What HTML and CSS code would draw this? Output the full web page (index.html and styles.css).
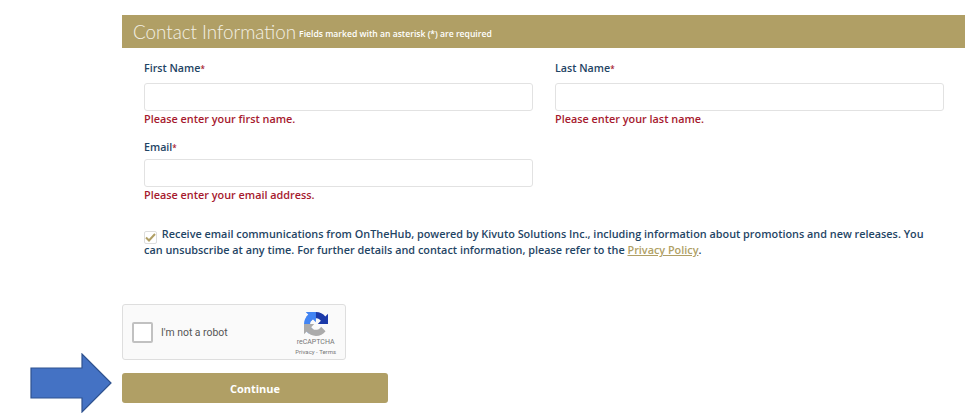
FILE: index.html
```html
<!DOCTYPE html>
<html lang="en">
<head>
  <meta charset="UTF-8">
  <meta name="viewport" content="width=device-width, initial-scale=1.0">
  <title>Contact Information</title>
  <link rel="stylesheet" href="styles.css">
</head>
<body>
  <svg class="arrow" width="84" height="60" viewBox="0 0 84 60">
    <path d="M1 15H52V1L81 30L52 59V45H1Z" fill="#4472c4" stroke="#2f528f" stroke-width="1.2"/>
  </svg>
  <div class="container">
    <div class="section-head">
      <span class="section-title">Contact Information</span>
      <span class="section-note">Fields marked with an asterisk (*) are required</span>
    </div>
    <div class="fields">
      <div class="field">
        <label>First Name<span class="req">*</span></label>
        <input type="text">
        <p class="error">Please enter your first name.</p>
      </div>
      <div class="field">
        <label>Last Name<span class="req">*</span></label>
        <input type="text">
        <p class="error">Please enter your last name.</p>
      </div>
      <div class="field field-tight">
        <label>Email<span class="req">*</span></label>
        <input type="text">
        <p class="error">Please enter your email address.</p>
      </div>
    </div>
    <p class="consent">
      <span class="check">
        <svg width="11" height="9" viewBox="0 0 11 9"><path d="M1 4.5L4 7.5L10 1" fill="none" stroke="#b09f65" stroke-width="2"/></svg>
      </span>
      Receive email communications from OnTheHub, powered by Kivuto Solutions Inc., including information about promotions and new releases. You can unsubscribe at any time. For further details and contact information, please refer to the <a href="#">Privacy Policy</a>.
    </p>
    <div class="captcha">
      <span class="captcha-box"></span>
      <span class="captcha-text">I'm not a robot</span>
      <div class="captcha-logo">
        <svg width="24" height="24" viewBox="0 0 64 64">
          <path d="M64 31.955l-.033-1.37V4.687l-7.16 7.16C50.948 4.674 42.033.093 32.05.093c-10.4 0-19.622 4.96-25.458 12.64l11.736 11.86a15.55 15.55 0 0 1 4.754-5.334c2.05-1.6 4.952-2.906 8.968-2.906.485 0 .86.057 1.135.163 4.976.393 9.288 3.14 11.828 7.124l-8.307 8.307 32.294.01" fill="#1c3aa9"/>
          <path d="M31.862.094l-1.37.033H4.594l7.16 7.16C4.58 13.147 0 22.06 0 32.046c0 10.4 4.96 19.622 12.64 25.458l11.86-11.736a15.55 15.55 0 0 1-5.334-4.754c-1.6-2.05-2.906-4.952-2.906-8.968 0-.485.057-.86.163-1.135.393-4.976 3.14-9.288 7.124-11.828l8.307 8.307L31.862.094" fill="#4285f4"/>
          <path d="M.001 32.045l.033 1.37v25.898l7.16-7.16c5.86 7.173 14.775 11.754 24.76 11.754 10.4 0 19.622-4.96 25.458-12.64L45.676 39.407a15.55 15.55 0 0 1-4.754 5.334c-2.05 1.6-4.952 2.906-8.968 2.906-.485 0-.86-.057-1.135-.163-4.976-.393-9.288-3.14-11.828-7.124l8.307-8.307-32.294-.008" fill="#ababab"/>
        </svg>
        <span class="captcha-brand">reCAPTCHA</span>
        <span class="captcha-links">Privacy - Terms</span>
      </div>
    </div>
    <button class="continue">Continue</button>
  </div>
</body>
</html>
```

FILE: styles.css
```css
body {
  font-family: "Open Sans", Arial, sans-serif;
  background: #fff;
  margin: 0;
  padding: 15px 10px 0 122px;
  color: #1f4565;
  overflow: hidden;
}
.container {
  width: 843px;
}
.arrow {
  position: absolute;
  left: 30px;
  top: 353px;
}
.section-head {
  background: #b09f65;
  color: #fff;
  height: 33px;
  display: flex;
  align-items: center;
  gap: 3px;
  padding-left: 11px;
}
.section-title {
  font-family: Lato, Arial, sans-serif;
  font-size: 18.8px;
  font-weight: 300;
  color: #f4f1e6;
}
.section-note {
  font-size: 8.6px;
  font-weight: 600;
  padding-top: 5px;
}
.fields {
  display: grid;
  grid-template-columns: 389px 389px;
  column-gap: 22px;
  row-gap: 14px;
  padding: 13px 0 0 22px;
}
.field label {
  display: block;
  font-size: 10.7px;
  font-weight: 600;
  line-height: 15px;
}
.req {
  color: #a6192e;
  font-size: 8px;
}
.field input {
  display: block;
  box-sizing: border-box;
  width: 100%;
  height: 28px;
  margin-top: 7px;
  border: 1px solid #e2e2e2;
  border-radius: 3px;
  background: #fff;
}
.field-tight input {
  margin-top: 4px;
}
.error {
  color: #a6192e;
  font-size: 10.85px;
  font-weight: 600;
  line-height: 15px;
  margin: 0;
}
.consent {
  margin: 24px 0 0 22px;
  width: 790px;
  font-size: 10.85px;
  font-weight: 600;
  line-height: 16px;
}
.consent a {
  color: #b09f65;
}
.check {
  display: inline-flex;
  align-items: center;
  justify-content: center;
  box-sizing: border-box;
  width: 13px;
  height: 13px;
  margin: -4px 2px -4px 0;
  border: 1px solid #ddd;
  border-radius: 2px;
  vertical-align: -4px;
}
.captcha {
  box-sizing: border-box;
  width: 224px;
  height: 56px;
  margin-top: 46px;
  display: flex;
  align-items: center;
  padding: 0 9px;
  background: #fafafa;
  border: 1px solid #dedede;
  border-radius: 3px;
}
.captcha-box {
  box-sizing: border-box;
  width: 21px;
  height: 21px;
  border: 2px solid #c1c1c1;
  border-radius: 2px;
  background: #fff;
}
.captcha-text {
  font-family: Roboto, Arial, sans-serif;
  font-size: 10.4px;
  color: #555;
  margin-left: 8px;
  flex: 1;
}
.captcha-logo {
  display: flex;
  flex-direction: column;
  align-items: center;
  color: #777;
  padding-top: 3px;
}
.captcha-brand {
  font-family: Roboto, Arial, sans-serif;
  font-size: 7px;
  line-height: 9px;
  margin-top: 2px;
}
.captcha-links {
  font-family: Roboto, Arial, sans-serif;
  font-size: 6px;
  line-height: 9px;
}
.continue {
  display: block;
  width: 266px;
  height: 30px;
  margin-top: 13px;
  background: #b09f65;
  color: #fff;
  border: none;
  border-radius: 3px;
  font-family: inherit;
  font-size: 11px;
  font-weight: 700;
}
```
